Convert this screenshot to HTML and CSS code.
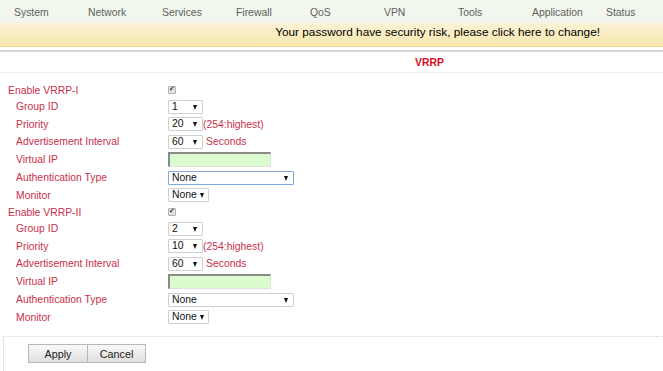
FILE: index.html
```html
<!DOCTYPE html>
<html lang="en">
<head>
  <meta charset="utf-8">
  <title>VRRP</title>
  <link rel="stylesheet" href="styles.css">
</head>
<body>
  <nav class="topnav">
    <a href="#">System</a>
    <a href="#">Network</a>
    <a href="#">Services</a>
    <a href="#">Firewall</a>
    <a href="#">QoS</a>
    <a href="#">VPN</a>
    <a href="#">Tools</a>
    <a href="#">Application</a>
    <a href="#">Status</a>
  </nav>

  <div class="notice"><a href="#">Your password have security risk, please click here to change!</a></div>

  <div class="title-bar"><h2>VRRP</h2></div>

  <form class="form">
    <!-- VRRP-I -->
    <div class="row chk">
      <label class="lbl top">Enable VRRP-I</label>
      <input type="checkbox" checked disabled>
    </div>
    <div class="row">
      <label class="lbl">Group ID</label>
      <span class="sel w-sm"><select><option>1</option></select></span>
    </div>
    <div class="row">
      <label class="lbl">Priority</label>
      <span class="sel w-sm"><select><option>20</option></select></span><span class="note">(254:highest)</span>
    </div>
    <div class="row">
      <label class="lbl">Advertisement Interval</label>
      <span class="sel w-sm"><select><option>60</option></select></span><span class="note gap">Seconds</span>
    </div>
    <div class="row ip">
      <label class="lbl">Virtual IP</label>
      <input type="text" class="ipbox">
    </div>
    <div class="row">
      <label class="lbl">Authentication Type</label>
      <span class="sel w-lg focus"><select><option>None</option></select></span>
    </div>
    <div class="row">
      <label class="lbl">Monitor</label>
      <span class="sel w-md"><select><option>None</option></select></span>
    </div>

    <!-- VRRP-II -->
    <div class="row chk">
      <label class="lbl top">Enable VRRP-II</label>
      <input type="checkbox" checked disabled>
    </div>
    <div class="row">
      <label class="lbl">Group ID</label>
      <span class="sel w-sm"><select><option>2</option></select></span>
    </div>
    <div class="row">
      <label class="lbl">Priority</label>
      <span class="sel w-sm"><select><option>10</option></select></span><span class="note">(254:highest)</span>
    </div>
    <div class="row">
      <label class="lbl">Advertisement Interval</label>
      <span class="sel w-sm"><select><option>60</option></select></span><span class="note gap">Seconds</span>
    </div>
    <div class="row ip">
      <label class="lbl">Virtual IP</label>
      <input type="text" class="ipbox">
    </div>
    <div class="row">
      <label class="lbl">Authentication Type</label>
      <span class="sel w-lg"><select><option>None</option></select></span>
    </div>
    <div class="row">
      <label class="lbl">Monitor</label>
      <span class="sel w-md"><select><option>None</option></select></span>
    </div>
  </form>

  <div class="actions">
    <button type="button" class="btn">Apply</button><button type="button" class="btn">Cancel</button>
  </div>
</body>
</html>
```

FILE: styles.css
```css
:root {
  --label: #c9304b;
  --title: #d2101f;
  --nav-text: #606060;
  --font: "Liberation Sans", Arial, sans-serif;
}
* { box-sizing: border-box; margin: 0; padding: 0; }
body {
  font-family: var(--font);
  font-size: 10.4px;
  background: #fff;
  color: #222;
  width: 663px;
  height: 371px;
  overflow: hidden;
}

/* top menu */
.topnav {
  display: grid;
  grid-template-columns: repeat(9, 74px);
  height: 23px;
  padding: 2px 0 0 14px;
  align-items: center;
  background: #f2f7ee;
}
.topnav a {
  color: var(--nav-text);
  text-decoration: none;
  font-size: 10.4px;
}

/* password warning */
.notice {
  height: 24px;
  padding: 2px 63px 0 0;
  text-align: right;
  line-height: 14px;
  background: linear-gradient(#fcf3d7, #f6e6ad);
  border-bottom: 1px solid #eed890;
}
.notice a {
  color: #000;
  text-decoration: none;
  font-size: 11.8px;
}

/* page title */
.title-bar {
  margin-top: 3px;
  border-top: 2px solid #d6d6d6;
  border-bottom: 1px solid #efefef;
  height: 23px;
  padding: 2px 0 0 196px;
  text-align: center;
}
.title-bar h2 {
  font-size: 10.4px;
  font-weight: bold;
  color: var(--title);
  line-height: 18px;
}

/* form rows */
.form {
  padding: 9px 0 0 8px;
}
.row {
  display: flex;
  align-items: center;
  height: 17.5px;
}
.row.chk { height: 16px; }
.row.ip { height: 18.5px; }
.lbl {
  width: 160px;
  padding-left: 8px;
  color: var(--label);
}
.lbl.top { padding-left: 0; }
.note { color: var(--label); }
.note.gap { margin-left: 3px; }

.row input[type="checkbox"] {
  appearance: none;
  width: 8px;
  height: 8px;
  border: 1px solid #b4b4b4;
  border-radius: 1px;
  background: #e2e2e2;
  position: relative;
}
.row input[type="checkbox"]:checked::after {
  content: "\2714";
  position: absolute;
  left: 0;
  top: -2px;
  font-size: 7px;
  color: #444;
}

.sel {
  position: relative;
  display: inline-block;
  height: 14px;
}
.sel select {
  appearance: none;
  width: 100%;
  height: 100%;
  border: 1px solid #cfcfcf;
  border-radius: 1px;
  background: #fff;
  font-family: var(--font);
  font-size: 10.4px;
  color: #111;
  padding: 0 0 0 3px;
  line-height: 12px;
}
/* dropdown arrow */
.sel::after {
  content: "";
  position: absolute;
  right: 6px;
  top: 5px;
  border-left: 2.5px solid transparent;
  border-right: 2.5px solid transparent;
  border-top: 5px solid #111;
  pointer-events: none;
}
.sel.w-md::after { right: 5px; }
.sel.focus select { border-color: #82a9d9; }
.w-sm { width: 35px; }
.w-md { width: 41px; }
.w-lg { width: 126px; }

.ipbox {
  width: 103px;
  height: 15px;
  background: #dbfdcd;
  border: 1px solid #e0e0e0;
  border-top: 2px solid #8a8a8a;
  border-left: 2px solid #8a8a8a;
}

/* buttons */
.actions {
  margin: 10px 0 0 3px;
  padding: 7px 0 0 24px;
  border-top: 1px dotted #d6d6d6;
  border-left: 1px solid #e4e4e4;
  height: 40px;
  display: flex;
}
.btn {
  width: 60px;
  height: 19px;
  font-family: var(--font);
  font-size: 10.8px;
  color: #222;
  background: linear-gradient(#fafafa, #dedede);
  border: 1px solid #b8b8b8;
}
.btn + .btn { width: 59px; margin-left: -1px; }
```
